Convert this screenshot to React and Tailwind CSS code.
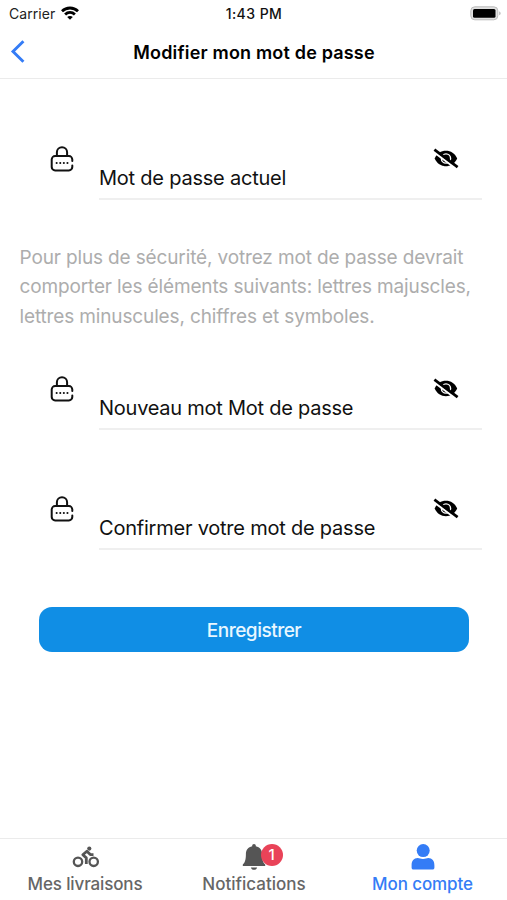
import { useState } from "react";

function StatusBar() {
  return (
    <div className="relative flex h-[27px] items-center justify-between pl-[9px] pr-[6px]">
      <div className="flex items-center gap-[6px]">
        <span className="text-[14px] leading-[20px] tracking-[0.05px] text-[#222]">Carrier</span>
        <svg className="mb-[2px] h-[14px] w-[18px]" viewBox="0 0 18 14" fill="none" stroke="black" strokeWidth="2.8">
          <path d="M1 5.2C5.5.9 12.5.9 17 5.2" />
          <path d="M4.1 8.4c2.8-2.7 7-2.7 9.8 0" />
          <path d="M9 13.8 6.2 11c1.6-1.5 4-1.5 5.6 0Z" fill="black" stroke="none" />
        </svg>
      </div>
      <span className="absolute inset-x-0 pl-px text-center text-[14px] font-medium leading-[20px] tracking-[0.45px] text-[#111]">1:43 PM</span>
      <svg className="h-[15px] w-[31px]" viewBox="0 0 31 15">
        <rect x=".8" y=".8" width="27" height="13" rx="4" fill="#e0e0e0" stroke="#bbb" />
        <rect x="3" y="3" width="22.5" height="8.7" rx="1.5" fill="black" />
        <path d="M29.3 5.3c1.7.9 1.7 3.2 0 4Z" fill="#aaa" />
      </svg>
    </div>
  );
}

function LockIcon() {
  return (
    <svg className="h-[26px] w-[24px]" viewBox="0 0 24 26" fill="none" stroke="#111" strokeWidth="2" strokeLinecap="round">
      <path d="M6.9 10V6.3a5.1 5.1 0 0 1 10.2 0V10" />
      <path d="M22.3 15v-1.5a3.4 3.4 0 0 0-3.4-3.4H5.1a3.4 3.4 0 0 0-3.4 3.4v7.5a3.4 3.4 0 0 0 3.4 3.4h13.8a3.4 3.4 0 0 0 3.4-3.4v-1.4" />
      <path d="M6.6 17.1h.1M10.2 17.1h.1M13.8 17.1h.1M17.4 17.1h.1" />
    </svg>
  );
}

function EyeOffIcon() {
  return (
    <svg className="h-[26px] w-[26px]" viewBox="0 0 26 26" fill="none">
      <path d="M1.6 14.5C4 9.4 8 6.8 12.9 6.8s8.9 2.6 11.3 7.7C21.8 19.6 17.8 22.2 12.9 22.2S4 19.6 1.6 14.5Z" fill="black" />
      <circle cx="13" cy="14.5" r="4.6" stroke="white" strokeWidth="1.4" />
      <path d="M-.3 7.2 23.4 24.9" stroke="white" strokeWidth="2.2" />
      <path d="M1.4 5.7 24.6 23.1" stroke="black" strokeWidth="2.7" />
    </svg>
  );
}

function BikeIcon() {
  return (
    <svg className="h-[22px] w-[28px]" viewBox="0 0 28 22" fill="none" stroke="#555" strokeWidth="2.3">
      <circle cx="6" cy="15.8" r="4.2" />
      <circle cx="21.7" cy="15.8" r="4.2" />
      <circle cx="17.3" cy="2.6" r="2.1" fill="#555" stroke="none" />
      <path d="M21.5 8.6h-3.2L14.9 5.2l-4.1 3.5 3.5 3.2v6" strokeWidth="2.8" strokeLinejoin="round" />
    </svg>
  );
}

function BellIcon() {
  return (
    <svg className="h-[26px] w-[24px]" viewBox="0 0 24 26" fill="#555">
      <path d="M12 0c-1.1 0-1.8.8-1.8 1.8v.5C6.1 3.1 3.9 6 3.9 10.2c0 6-1 8.2-3.1 10.4V22h22.4v-1.4c-2.1-2.2-3.1-4.4-3.1-10.4 0-4.2-2.2-7.1-6.3-7.9v-.5C13.8.8 13.1 0 12 0Z" />
      <path d="M8.9 23.4h6.2c-.4 1.5-1.4 2.3-3.1 2.3s-2.7-.8-3.1-2.3Z" />
    </svg>
  );
}

function PersonIcon() {
  return (
    <svg className="h-[26px] w-[24px]" viewBox="0 0 24 26" fill="#347cf6">
      <circle cx="12.2" cy="6.6" r="6.5" />
      <path d="M.6 21.5c0-4.5 2.2-7.4 6.2-7.4 1.4 0 2.8 1 5.2 1s3.8-1 5.2-1c4 0 6.2 2.9 6.2 7.4v2.2c0 1-.8 1.8-1.8 1.8H2.4c-1 0-1.8-.8-1.8-1.8Z" />
    </svg>
  );
}

function PasswordField({ label, labelClass }) {
  const [value, setValue] = useState("");
  const [visible, setVisible] = useState(false);

  return (
    <div className="flex h-[60px] pl-[50px] pr-[25px]">
      <div className="w-[49px] pt-[6px]">
        <LockIcon />
      </div>
      <div className="flex flex-1 justify-between border-b-2 border-[#efefef]">
        <input
          type={visible ? "text" : "password"}
          value={value}
          onChange={(e) => setValue(e.target.value)}
          placeholder={label}
          className={`mt-[22px] h-[32px] w-[320px] text-[20px] text-black outline-none placeholder:text-[#111] ${labelClass}`}
        />
        <button type="button" onClick={() => setVisible(!visible)} className="mr-[23px] mt-[4px] h-[26px] w-[26px]">
          <EyeOffIcon />
        </button>
      </div>
    </div>
  );
}

export default function App() {
  return (
    <div className="flex h-[900px] w-[507px] flex-col overflow-hidden bg-white font-[Inter,sans-serif]">
      <StatusBar />
      <header className="relative flex h-[52px] items-center justify-center border-b border-[#ebebeb]">
        <svg className="absolute left-[10px] top-[13px] h-[23px] w-[15px]" viewBox="0 0 15 23" fill="none" stroke="#347cf6" strokeWidth="2.9">
          <path d="M13.4 1.2 3 11.5 13.4 21.8" />
        </svg>
        <h1 className="pl-px text-[18px] font-semibold leading-[24px] tracking-[0.18px] text-black">Modifier mon mot de passe</h1>
      </header>

      <main className="flex-1 pt-[61px]">
        <PasswordField label="Mot de passe actuel" labelClass="tracking-[-0.22px]" />
        <p className="h-[130px] whitespace-nowrap pl-[19.5px] pt-[43px] text-[19px] leading-[29.3px] tracking-[-0.14px] text-[#adadad]">
          Pour plus de sécurité, votrez mot de passe devrait
          <br />
          comporter les éléments suivants: lettres majuscles,
          <br />
          lettres minuscules, chiffres et symboles.
        </p>
        <div className="mt-[40px] flex flex-col gap-[60px]">
          <PasswordField label="Nouveau mot Mot de passe" labelClass="tracking-[-0.25px]" />
          <PasswordField label="Confirmer votre mot de passe" labelClass="tracking-[-0.22px]" />
        </div>
        <button type="button" className="ml-[39px] mt-[57px] h-[45px] w-[430px] rounded-[13px] bg-[#108ee5] pt-[3px] text-[19px] font-medium tracking-[-0.48px] text-[#e8f7ff]">
          Enregistrer
        </button>
      </main>

      <nav className="grid h-[62px] grid-cols-3 border-t border-[#ebebeb] text-[17px] font-medium text-[#666]">
        <div className="flex flex-col items-center pt-[5px]">
          <div className="h-[26px] pl-[2px] pt-[2px]">
            <BikeIcon />
          </div>
          <span className="pl-px leading-[28px] tracking-[-0.14px]">Mes livraisons</span>
        </div>
        <div className="flex flex-col items-center pt-[5px]">
          <div className="relative h-[26px] w-[24px]">
            <BellIcon />
            <span className="absolute left-[19px] top-0 flex h-[22px] w-[22px] items-center justify-center rounded-full bg-[#e94358] text-[15px] text-white">1</span>
          </div>
          <span className="pl-px leading-[28px]">Notifications</span>
        </div>
        <div className="flex flex-col items-center pt-[5px] text-[#347cf6]">
          <PersonIcon />
          <span className="leading-[28px] tracking-[-0.1px]">Mon compte</span>
        </div>
      </nav>
    </div>
  );
}
